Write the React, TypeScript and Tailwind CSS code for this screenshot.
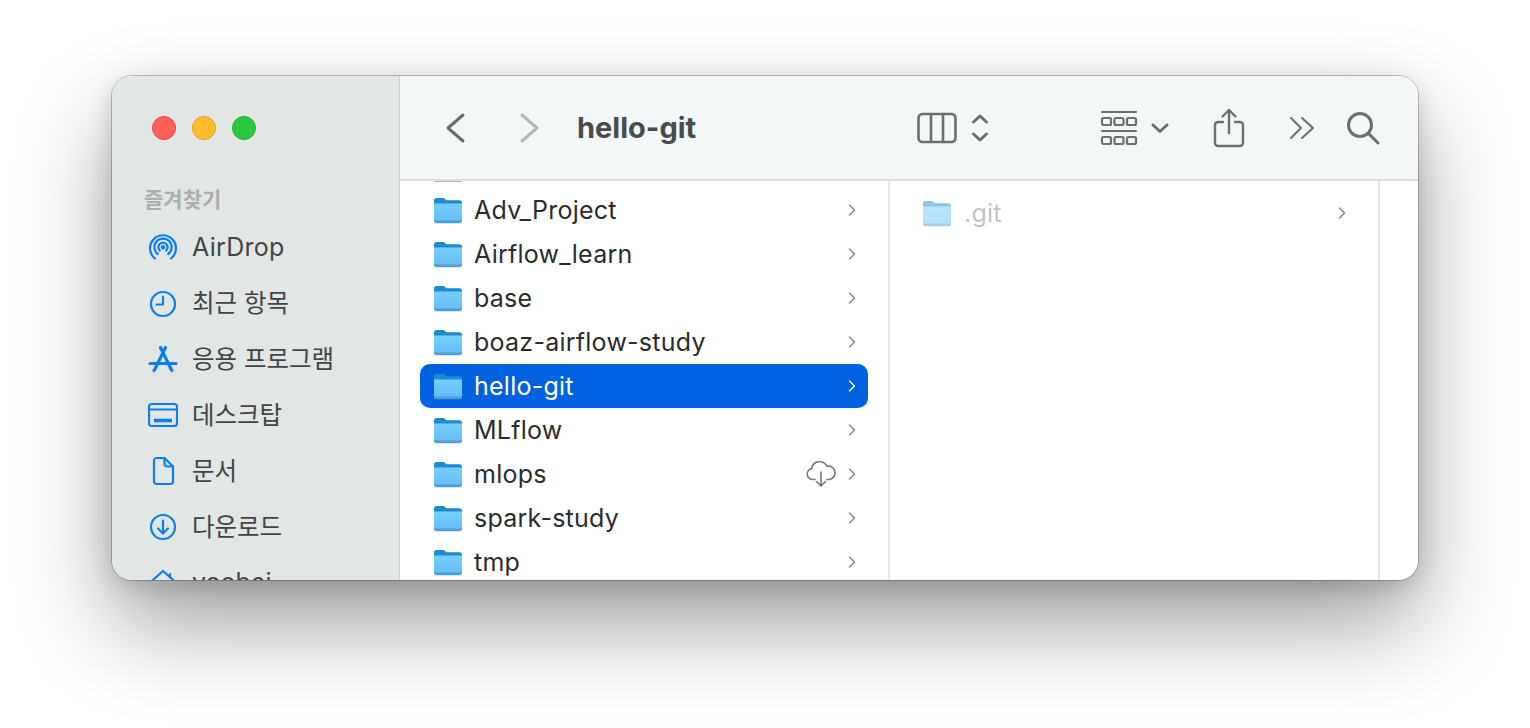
import type { ReactNode } from "react";
import { ChevronRight } from "lucide-react";

const SANS = "font-['Inter','Noto_Sans_CJK_KR',sans-serif]";

const folders = [
  "Adv_Project",
  "Airflow_learn",
  "base",
  "boaz-airflow-study",
  "hello-git",
  "MLflow",
  "mlops",
  "spark-study",
  "tmp",
];

function FolderIcon({ id, dim }: { id: string; dim?: boolean }) {
  return (
    <svg width="30" height="30" viewBox="0 0 30 30" className={dim ? "shrink-0 opacity-50" : "shrink-0"}>
      <defs>
        <linearGradient id={id} x1="0" y1="0" x2="0" y2="1">
          <stop offset="0" stopColor="#78cffd" />
          <stop offset="1" stopColor="#62bdf7" />
        </linearGradient>
      </defs>
      <path d="M1 5.500C1 4 2 3 3.500 3h6.200c1 0 1.600.3 2.300 1l1.300 1.300h13.200c1.400 0 2.500 1.100 2.500 2.500v4H1z" fill="#1d8bd4" />
      <path d="M1 8.600h28v17c0 1.400-1 2.400-2.400 2.400H3.400C2 28 1 27 1 25.600z" fill={`url(#${id})`} />
      <path d="M1 25.400h28v.6c0 1.200-1 2.200-2.400 2.200H3.400C2 28.200 1 27.200 1 26z" fill="#4f9fd4" />
    </svg>
  );
}

function Row({ name, index }: { name: string; index: number }) {
  const selected = name === "hello-git";
  return (
    <div
      className={`flex h-11 items-center rounded-[10px] pl-[13px] pr-[6px] ${
        selected ? "bg-[#0062e0] text-white" : "text-[#2b2d2d]"
      }`}
    >
      <FolderIcon id={`folder-${index}`} />
      <span className="ml-[11px] flex-1 text-[25px] leading-none tracking-[0.25px]">{name}</span>
      {name === "mlops" && (
        <svg width="32" height="28" viewBox="0 0 32 28" fill="none" stroke="#757878" strokeWidth="1.6" className="mr-[5px]">
          <path d="M10 19.500H7.500a5.500 5.500 0 0 1-.8-10.900A8 8 0 0 1 21.800 6.200a6.700 6.700 0 0 1 2.900 13.300H22" strokeLinecap="round" />
          <path d="M16 12v14M11.500 21.500 16 26l4.500-4.500" strokeLinecap="round" strokeLinejoin="round" />
        </svg>
      )}
      <ChevronRight size={20} strokeWidth={1.6} className={selected ? "text-white" : "text-[#808383]"} />
    </div>
  );
}

const blueIcon = {
  fill: "none",
  stroke: "#0a7ff0",
  strokeWidth: 2.2,
  strokeLinecap: "round" as const,
  strokeLinejoin: "round" as const,
};

const sidebarItems: { label: string; textClass: string; icon: ReactNode }[] = [
  {
    label: "AirDrop",
    textClass: "text-[25px] tracking-[0.3px]",
    icon: (
      <svg width="30" height="30" viewBox="0 0 30 30" {...blueIcon}>
        <path d="M7 25.500a13 13 0 1 1 16 0" />
        <path d="M9.800 21a8.600 8.600 0 1 1 10.400 0" />
        <path d="M11.800 17.600a4.600 4.600 0 1 1 6.400 0" />
        <circle cx="15" cy="14.300" r="1.200" />
      </svg>
    ),
  },
  {
    label: "최근 항목",
    textClass: "text-[24.500px]",
    icon: (
      <svg width="30" height="30" viewBox="0 0 30 30" {...blueIcon}>
        <circle cx="15" cy="15" r="12" />
        <path d="M15 7.500V15.500H8.500" />
      </svg>
    ),
  },
  {
    label: "응용 프로그램",
    textClass: "text-[24.500px]",
    icon: (
      <svg width="30" height="30" viewBox="0 0 30 30" {...blueIcon} strokeWidth={3.2}>
        <path d="M12.500 3.500 22.500 24" />
        <path d="M17.500 3.500 7.500 24" />
        <path d="M2 19.500h26" />
        <path d="M6 26.500l1.500-2.500M24 26.500 22.500 24" />
      </svg>
    ),
  },
  {
    label: "데스크탑",
    textClass: "text-[24.500px]",
    icon: (
      <svg width="30" height="30" viewBox="0 0 30 30" {...blueIcon}>
        <rect x="1" y="4" width="28" height="22" rx="2.500" />
        <path d="M1 9.500h28" />
        <path d="M6 20.500h18" strokeWidth={3.600} strokeLinecap="butt" />
      </svg>
    ),
  },
  {
    label: "문서",
    textClass: "text-[24.500px]",
    icon: (
      <svg width="30" height="30" viewBox="0 0 30 30" {...blueIcon}>
        <path d="M8.500 2h8L25 10.500V25.500a2.500 2.500 0 0 1-2.500 2.500h-14A2.500 2.500 0 0 1 6 25.500v-21A2.500 2.500 0 0 1 8.500 2z" />
        <path d="M16.500 2v6a2.500 2.500 0 0 0 2.500 2.500h6" />
      </svg>
    ),
  },
  {
    label: "다운로드",
    textClass: "text-[24.500px]",
    icon: (
      <svg width="30" height="30" viewBox="0 0 30 30" {...blueIcon}>
        <circle cx="15" cy="15" r="12" />
        <path d="M15 8.500v12.500M10 16.500l5 5 5-5" />
      </svg>
    ),
  },
  {
    label: "yoobei",
    textClass: "text-[25px]",
    icon: (
      <svg width="30" height="30" viewBox="0 0 30 30" {...blueIcon}>
        <path d="M1.500 15 15 3l13.500 12" />
        <path d="M22 6v3" />
        <path d="M5 13v14h20V13" />
      </svg>
    ),
  },
];

function Sidebar() {
  return (
    <aside className="flex w-[288px] shrink-0 flex-col border-r border-[#cdd0d0] bg-[#e2e6e5] pl-9">
      <div className="mt-10 flex gap-4 pl-1">
        <span className="h-6 w-6 rounded-full border border-[#e5453f] bg-[#ff5f57]" />
        <span className="h-6 w-6 rounded-full border border-[#e0a028] bg-[#febc2e]" />
        <span className="h-6 w-6 rounded-full border border-[#22ad38] bg-[#28c840]" />
      </div>
      <div className="mt-12 -ml-1 h-6 text-[21px] font-semibold leading-6 text-[#a9aeae]">즐겨찾기</div>
      <nav className="mt-[8px] flex flex-col">
        {sidebarItems.map((item) => (
          <div key={item.label} className="flex h-[55.8px] shrink-0 items-center gap-[14px] text-[#414545]">
            {item.icon}
            <span className={`leading-none ${item.textClass}`}>{item.label}</span>
          </div>
        ))}
      </nav>
    </aside>
  );
}

const toolIcon = {
  fill: "none",
  stroke: "#6b6f6f",
  strokeWidth: 2.600,
  strokeLinecap: "round" as const,
  strokeLinejoin: "round" as const,
};

function Toolbar() {
  return (
    <header className="flex h-[105px] shrink-0 items-center border-b-2 border-[#dcdfdf] bg-[#f4f7f7] pl-[45px]">
      <svg width="22" height="32" viewBox="0 0 22 32" {...toolIcon} strokeWidth={3}>
        <path d="M18 3 3 16l15 13" />
      </svg>
      <svg width="22" height="32" viewBox="0 0 22 32" {...toolIcon} stroke="#b5b8b8" strokeWidth={3} className="ml-[51px]">
        <path d="M4 3l15 13L4 29" />
      </svg>
      <span className="ml-[37px] w-[340px] text-[29px] font-bold leading-none text-[#494c4c]">hello-git</span>
      <svg width="40" height="32" viewBox="0 0 40 32" {...toolIcon}>
        <rect x="1.500" y="2" width="37" height="28" rx="4" />
        <path d="M14 2v28M26 2v28" />
      </svg>
      <svg width="18" height="32" viewBox="0 0 18 32" {...toolIcon} strokeWidth={3} className="ml-[14px]">
        <path d="M2.500 10 9 4l6.500 6M2.500 22 9 28l6.500-6" />
      </svg>
      <svg width="38" height="36" viewBox="0 0 38 36" {...toolIcon} strokeWidth={2.200} className="ml-[111px]">
        <path d="M2 2h34M2 21h34" />
        <rect x="2" y="8" width="9" height="7" rx="1.500" />
        <rect x="14.500" y="8" width="9" height="7" rx="1.500" />
        <rect x="27" y="8" width="9" height="7" rx="1.500" />
        <rect x="2" y="27" width="9" height="7" rx="1.500" />
        <rect x="14.500" y="27" width="9" height="7" rx="1.500" />
        <rect x="27" y="27" width="9" height="7" rx="1.500" />
      </svg>
      <svg width="18" height="12" viewBox="0 0 18 12" {...toolIcon} strokeWidth={3} className="ml-[13px]">
        <path d="M2 3l7 6.500L16 3" />
      </svg>
      <svg width="32" height="40" viewBox="0 0 32 40" {...toolIcon} strokeWidth={2.400} className="ml-[44px]">
        <path d="M10 14H5a3 3 0 0 0-3 3v18a3 3 0 0 0 3 3h22a3 3 0 0 0 3-3V17a3 3 0 0 0-3-3h-5" />
        <path d="M16 25V2M9.500 8.500 16 2l6.500 6.500" />
      </svg>
      <svg width="26" height="24" viewBox="0 0 26 24" {...toolIcon} strokeWidth={2} className="ml-[44px]">
        <path d="M2 2l10 10L2 22M13 2l11 10-11 10" />
      </svg>
      <svg width="34" height="34" viewBox="0 0 34 34" {...toolIcon} strokeWidth={3} className="ml-[31px]">
        <circle cx="14" cy="14" r="11.500" />
        <path d="M22.500 22.500 32 32" />
      </svg>
    </header>
  );
}

export default function App() {
  return (
    <div className={`h-[728px] w-[1530px] overflow-hidden bg-white pl-[112px] pt-[76px] ${SANS}`}>
      <div className="flex h-[504px] w-[1306px] overflow-hidden rounded-[20px] shadow-[0_0_0_1px_rgba(0,0,0,0.22),0_44px_90px_rgba(0,0,0,0.38),0_6px_24px_rgba(0,0,0,0.16)]">
        <Sidebar />
        <main className="flex min-w-0 flex-1 flex-col bg-white">
          <Toolbar />
          <div className="flex min-h-0 flex-1">
            <div className="w-[490px] shrink-0 overflow-hidden border-r-2 border-[#e8e8e8] px-5">
              {/* bottom edge of the row scrolled out under the toolbar */}
              <div className="ml-[14px] h-px w-7 bg-[#b8bbbb]" />
              <div className="mt-[6px]">
                {folders.map((name, i) => (
                  <Row key={name} name={name} index={i} />
                ))}
              </div>
            </div>
            <div className="w-[490px] shrink-0 border-r-2 border-[#e4e4e4] pt-[10px]">
              <div className="flex h-11 items-center pl-[32px] pr-[26px]">
                <FolderIcon id="folder-git" dim />
                <span className="ml-[12px] flex-1 text-[25px] leading-none tracking-[0.25px] text-[#c2c4c4]">.git</span>
                <ChevronRight size={20} strokeWidth={1.600} className="text-[#808383]" />
              </div>
            </div>
          </div>
        </main>
      </div>
    </div>
  );
}
